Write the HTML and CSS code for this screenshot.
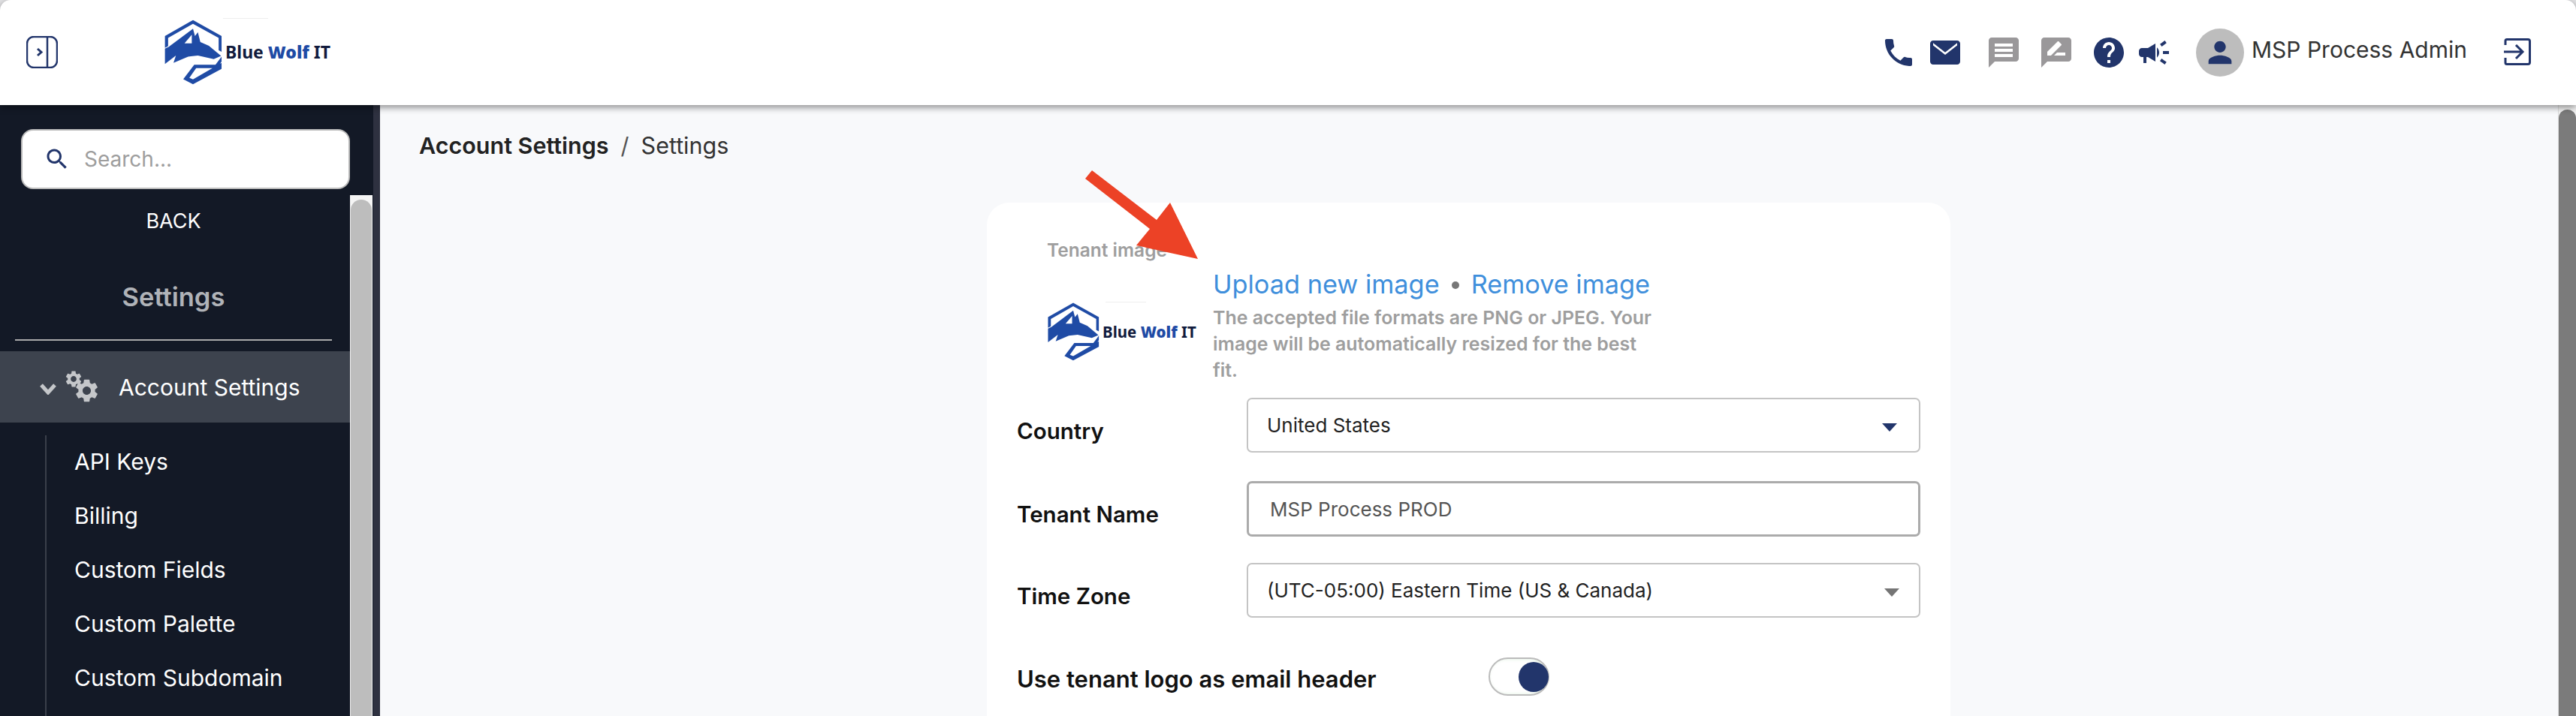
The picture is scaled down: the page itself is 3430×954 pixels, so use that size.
FILE: index.html
```html
<!DOCTYPE html>
<html lang="en">
<head>
  <meta charset="UTF-8">
  <meta name="viewport" content="width=device-width, initial-scale=1.0">
  <title>Account Settings</title>
  <link rel="stylesheet" href="styles.css">
</head>
<body>
  <svg class="defs" width="0" height="0">
    <symbol id="wolf" viewBox="0 0 240 270">
      <path class="wolf-blue" d="M120 5 L237 70 V135 L225 129 V78 L120 20 L18 78 V112 L5 119 V70 Z"/>
      <path class="wolf-blue" fill-rule="evenodd" d="M5 185 V122 L20 115 L120 40 L128 70 L140 55 L150 95 L185 110 L235 152 L205 165 L140 150 L100 155 L40 180 L50 150 Z M85 100 L115 65 V100 Z"/>
      <path class="wolf-blue" d="M237 155 L212 188 L125 188 L80 247 L120 268 L237 205 V180 L120 248 L105 242 L133 202 L218 202 L237 175 Z"/>
    </symbol>
    <symbol id="gear" viewBox="0 0 24 24">
      <path d="M19.14 12.94c.04-.3.06-.61.06-.94 0-.32-.02-.64-.07-.94l2.03-1.58c.18-.14.23-.41.12-.61l-1.92-3.32c-.12-.22-.37-.29-.59-.22l-2.39.96c-.5-.38-1.03-.7-1.62-.94l-.36-2.54c-.04-.24-.24-.41-.48-.41h-3.84c-.24 0-.43.17-.47.41l-.36 2.54c-.59.24-1.13.57-1.62.94l-2.39-.96c-.22-.08-.47 0-.59.22L2.74 8.87c-.12.21-.08.47.12.61l2.03 1.58c-.05.3-.09.63-.09.94s.02.64.07.94l-2.03 1.58c-.18.14-.23.41-.12.61l1.92 3.32c.12.22.37.29.59.22l2.39-.96c.5.38 1.03.7 1.62.94l.36 2.54c.05.24.24.41.48.41h3.84c.24 0 .44-.17.47-.41l.36-2.54c.59-.24 1.13-.56 1.62-.94l2.39.96c.22.08.47 0 .59-.22l1.92-3.32c.12-.22.07-.47-.12-.61l-2.01-1.58zM12 15.6c-1.98 0-3.6-1.62-3.6-3.6s1.62-3.6 3.6-3.6 3.6 1.62 3.6 3.6-1.62 3.6-3.6 3.6z"/>
    </symbol>
  </svg>

  <!-- Top bar -->
  <header class="topbar">
    <svg class="panel-icon" viewBox="0 0 42 43">
      <rect x="1" y="1" width="40" height="41" rx="9"/>
      <path d="M28 1 V42"/>
      <path class="panel-chevron" d="M15 17 L20 21.5 L15 26"/>
    </svg>
    <div class="logo logo-top">
      <svg class="logo-mark"><use href="#wolf"/></svg>
      <span class="logo-name">Blue <b>Wolf</b> IT</span>
    </div>

    <div class="top-actions">
      <svg class="icon navy" viewBox="0 0 24 24"><path d="M6.62 10.79c1.44 2.83 3.76 5.14 6.59 6.59l2.2-2.2c.27-.27.67-.36 1.02-.24 1.12.37 2.33.57 3.57.57.55 0 1 .45 1 1V20c0 .55-.45 1-1 1-9.39 0-17-7.61-17-17 0-.55.45-1 1-1h3.5c.55 0 1 .45 1 1 0 1.25.2 2.45.57 3.57.11.35.03.74-.25 1.02l-2.2 2.2z"/></svg>
      <svg class="icon navy gap-mail" viewBox="0 0 24 24"><path d="M20 4H4c-1.1 0-2 .9-2 2v12c0 1.1.9 2 2 2h16c1.1 0 2-.9 2-2V6c0-1.1-.9-2-2-2zm0 3.2l-8 6.3-8-6.3V5.6l8 6.3 8-6.3v1.6z"/></svg>
      <svg class="icon grey gap-chat" viewBox="0 0 24 24"><path d="M20 2H4c-1.1 0-2 .9-2 2v18l4-4h14c1.1 0 2-.9 2-2V4c0-1.1-.9-2-2-2zM6 6h12v2H6V6zm0 3.5h12v2H6v-2zm0 3.5h12v2H6v-2z"/></svg>
      <svg class="icon grey gap-help" viewBox="0 0 24 24"><path d="M20 2H4c-1.1 0-2 .9-2 2v18l4-4h14c1.1 0 2-.9 2-2V4c0-1.1-.9-2-2-2zM6 14v-2.47l6.88-6.88c.2-.2.51-.2.71 0l1.77 1.77c.2.2.2.51 0 .71L8.47 14H6zm12 0h-7.5l2-2H18v2z"/></svg>
      <svg class="icon navy gap-help" viewBox="0 0 24 24"><path d="M12 2C6.48 2 2 6.48 2 12s4.48 10 10 10 10-4.48 10-10S17.52 2 12 2zm1 17h-2v-2h2v2zm2.07-7.75l-.9.92C13.45 12.9 13 13.5 13 15h-2v-.5c0-1.1.45-2.1 1.17-2.83l1.24-1.26c.37-.36.59-.86.59-1.41 0-1.1-.9-2-2-2s-2 .9-2 2H8c0-2.21 1.79-4 4-4s4 1.79 4 4c0 .88-.36 1.68-.93 2.25z"/></svg>
      <svg class="icon navy gap-mega" viewBox="0 0 24 24"><path d="M18 11v2h4v-2h-4zm-2 6.61c.96.71 2.21 1.65 3.2 2.39.4-.53.8-1.07 1.2-1.6-.99-.74-2.24-1.68-3.2-2.4-.4.54-.8 1.08-1.2 1.61zM20.4 5.6c-.4-.53-.8-1.07-1.2-1.6-.99.74-2.24 1.68-3.2 2.4.4.53.8 1.07 1.2 1.6.96-.72 2.21-1.65 3.2-2.4zM4 9c-1.1 0-2 .9-2 2v2c0 1.1.9 2 2 2h1v4h2v-4h1l5 3V6L8 9H4zm11.5 3c0-1.33-.58-2.53-1.5-3.35v6.69c.92-.81 1.5-2.01 1.5-3.34z"/></svg>
      <div class="avatar">
        <svg class="avatar-icon navy" viewBox="0 0 24 24"><path d="M12 12c2.21 0 4-1.79 4-4s-1.79-4-4-4-4 1.79-4 4 1.79 4 4 4zm0 2c-2.67 0-8 1.34-8 4v2h16v-2c0-2.66-5.33-4-8-4z"/></svg>
      </div>
      <span class="user-name">MSP Process Admin</span>
      <svg class="logout-icon" viewBox="0 0 36 36">
        <path d="M2 9 V3.5 Q2 1.5 4 1.5 H32 Q34.5 1.5 34.5 4 V32 Q34.5 34.5 32 34.5 H4 Q2 34.5 2 32.5 V26"/>
        <path d="M0 18 H24 M16 9 L25 18 L16 27"/>
      </svg>
    </div>
  </header>

  <div class="layout">
    <!-- Sidebar -->
    <aside class="sidebar">
      <div class="search">
        <svg class="search-icon navy" viewBox="0 0 24 24"><path d="M15.5 14h-.79l-.28-.27C15.41 12.59 16 11.11 16 9.5 16 5.91 13.09 3 9.5 3S3 5.91 3 9.5 5.91 16 9.5 16c1.61 0 3.09-.59 4.23-1.57l.27.28v.79l5 4.99L20.49 19l-4.99-5zm-6 0C7.01 14 5 11.99 5 9.5S7.01 5 9.5 5 14 7.01 14 9.5 11.99 14 9.5 14z"/></svg>
        <span class="search-text">Search...</span>
      </div>
      <div class="side-scroll">
        <nav class="side-nav">
          <div class="back">BACK</div>
          <div class="side-title">Settings</div>
          <div class="side-divider"></div>
          <div class="side-active">
            <svg class="chevron" viewBox="0 0 22 16"><path d="M2 3 L11 13 L20 3"/></svg>
            <span class="gears">
              <svg class="gear-small"><use href="#gear"/></svg>
              <svg class="gear-big"><use href="#gear"/></svg>
            </span>
            <span>Account Settings</span>
          </div>
          <ul class="sub-list">
            <li>API Keys</li>
            <li>Billing</li>
            <li>Custom Fields</li>
            <li>Custom Palette</li>
            <li>Custom Subdomain</li>
          </ul>
        </nav>
        <div class="side-track"><div class="side-thumb"></div></div>
      </div>
    </aside>

    <!-- Main -->
    <main class="main">
      <div class="content">
        <div class="breadcrumb"><b>Account Settings</b><span class="crumb-sep">/</span><span>Settings</span></div>
        <section class="card">
          <div class="tenant-image">
            <div class="tenant-left">
              <div class="tenant-title">Tenant image</div>
              <div class="logo logo-small">
                <svg class="logo-mark"><use href="#wolf"/></svg>
                <span class="logo-name">Blue <b>Wolf</b> IT</span>
              </div>
            </div>
            <div class="tenant-right">
              <div class="image-links"><a>Upload new image</a><span class="dot"></span><a>Remove image</a></div>
              <p class="image-note">The accepted file formats are PNG or JPEG. Your image will be automatically resized for the best fit.</p>
            </div>
          </div>

          <div class="form-row row-country">
            <label>Country</label>
            <div class="control"><span>United States</span><i class="caret caret-navy"></i></div>
          </div>
          <div class="form-row row-name">
            <label>Tenant Name</label>
            <div class="control control-input"><span>MSP Process PROD</span></div>
          </div>
          <div class="form-row row-zone">
            <label>Time Zone</label>
            <div class="control"><span>(UTC-05:00) Eastern Time (US &amp; Canada)</span><i class="caret"></i></div>
          </div>
          <div class="toggle-row">
            <label>Use tenant logo as email header</label>
            <div class="toggle"><div class="toggle-thumb"></div></div>
          </div>
        </section>
      </div>
      <div class="main-track"><div class="main-thumb"></div></div>

      <!-- annotation arrow -->
      <svg class="arrow" viewBox="0 0 150 118">
        <path d="M9 0 L0 11 L86 78 L68 100 L150 118 L113 43 L95 66 Z"/>
      </svg>
    </main>
  </div>
</body>
</html>
```

FILE: styles.css
```css
* {
  box-sizing: border-box;
}

html,
body {
  height: 954px;
}

body {
  margin: 0;
  overflow: hidden;
  display: flex;
  flex-direction: column;
  font-family: "Inter", "Noto Sans", sans-serif;
  background: #e4e4e6;
  color: #333;
}

.defs {
  position: absolute;
}

.navy {
  fill: #22356b;
}

.grey {
  fill: #9a989a;
}

/* Top bar */
.topbar {
  position: relative;
  z-index: 2;
  flex: 0 0 140px;
  display: flex;
  align-items: center;
  padding: 0 60px 0 35px;
  background: #fff;
  border-radius: 14px 14px 0 0;
  box-shadow: 0 3px 10px rgba(0, 0, 0, 0.45);
}

.panel-icon {
  width: 42px;
  height: 43px;
  margin-top: -2px;
  fill: none;
  stroke: #22356b;
  stroke-width: 2.5;
}

.panel-chevron {
  stroke-width: 3;
}

.logo {
  position: relative;
  display: flex;
  align-items: center;
}

.logo-top {
  margin-left: 141px;
  margin-top: -2px;
}

.logo-top .logo-mark {
  width: 78px;
  height: 88px;
}

.logo-name {
  font-family: "Noto Sans", sans-serif;
  font-weight: 700;
  color: #111b3d;
  white-space: nowrap;
}

.logo-name b {
  color: #1f4ba5;
}

.logo-name::before {
  content: "";
  position: absolute;
  top: -1px;
  height: 1px;
  background: #eee;
}

.logo-top .logo-name {
  margin-left: 4px;
  font-size: 23px;
}

.logo-top .logo-name::before {
  left: 79px;
  width: 60px;
}

.wolf-blue {
  fill: #1f4ba5;
}

.top-actions {
  margin-left: auto;
  display: flex;
  align-items: center;
}

.icon {
  width: 48px;
  height: 48px;
}

.gap-mail {
  margin-left: 14px;
}

.gap-chat {
  margin-left: 30px;
}

.gap-help {
  margin-left: 22px;
}

.gap-mega {
  margin-left: 12px;
}

.avatar {
  width: 64px;
  height: 64px;
  margin-left: 32px;
  display: flex;
  align-items: center;
  justify-content: center;
  border-radius: 50%;
  background: #bdbdbd;
}

.avatar-icon {
  width: 46px;
  height: 46px;
}

.user-name {
  width: 287px;
  margin-left: 10px;
  margin-top: -8px;
  font-size: 30px;
  white-space: nowrap;
  color: #333;
}

.logout-icon {
  width: 36px;
  height: 36px;
  margin-left: 49px;
  margin-top: -2px;
  fill: none;
  stroke: #22356b;
  stroke-width: 3;
}

/* Layout */
.layout {
  flex: 1;
  display: flex;
  min-height: 0;
}

/* Sidebar */
.sidebar {
  flex: 0 0 506px;
  display: flex;
  flex-direction: column;
  padding-top: 32px;
  background: #131926;
  border-right: 9px solid #2e3140;
  color: #fff;
}

.search {
  width: 438px;
  height: 80px;
  margin-left: 28px;
  display: flex;
  align-items: center;
  padding-left: 28px;
  background: #fff;
  border: 2px solid #bbb;
  border-radius: 16px;
}

.search-icon {
  width: 36px;
  height: 36px;
}

.search-text {
  margin-left: 18px;
  font-size: 28px;
  color: #9e9e9e;
}

.side-scroll {
  flex: 1;
  min-height: 0;
  display: flex;
  margin-top: 8px;
}

.side-nav {
  width: 466px;
}

.back {
  padding: 17px 4px 0 0;
  height: 54px;
  line-height: 36px;
  text-align: center;
  font-size: 27px;
}

.side-title {
  margin-top: 60px;
  padding-right: 4px;
  height: 44px;
  line-height: 44px;
  text-align: center;
  font-size: 34.5px;
  font-weight: 600;
  color: #b0b3b8;
}

.side-divider {
  width: 422px;
  height: 2px;
  margin: 34px 0 0 20px;
  background: #aaa;
}

.side-active {
  height: 95px;
  margin-top: 14px;
  display: flex;
  align-items: center;
  padding-left: 53px;
  background: #3d434e;
  font-size: 30px;
}

.chevron {
  width: 22px;
  height: 16px;
  margin-top: 4px;
  fill: none;
  stroke: #c5c7ca;
  stroke-width: 5;
}

.gears {
  position: relative;
  width: 44px;
  height: 42px;
  margin: 0 27px 0 12px;
  fill: #c5c7ca;
}

.gear-small {
  position: absolute;
  left: -2px;
  top: -3px;
  width: 26px;
  height: 26px;
}

.gear-big {
  position: absolute;
  left: 10px;
  top: 7px;
  width: 37px;
  height: 37px;
}

.sub-list {
  list-style: none;
  margin: 17px 0 0 60px;
  padding: 0 0 0 37px;
  border-left: 2px solid #3a3f4a;
  height: 374px;
  font-size: 30px;
}

.sub-list li {
  height: 72px;
  line-height: 70px;
}

.side-track {
  width: 30px;
  background: #f5f5f5;
  padding: 6px 1px 0;
}

.side-thumb {
  height: 100%;
  background: #bdbdbd;
  border-radius: 14px 14px 0 0;
}

/* Main */
.main {
  position: relative;
  flex: 1;
  display: flex;
  min-width: 0;
  background: #f8f9fb;
}

.content {
  flex: 1;
  min-width: 0;
}

.breadcrumb {
  margin: 38px 0 0 52px;
  height: 32px;
  line-height: 32px;
  font-size: 30.5px;
}

.breadcrumb b {
  font-weight: 600;
  color: #222;
}

.crumb-sep {
  margin: 0 16px;
  color: #555;
}

.card {
  width: 1283px;
  height: 684px;
  margin: 60px 0 0 808px;
  padding: 46px 40px 0;
  background: #fff;
  border-radius: 30px 30px 0 0;
}

.tenant-image {
  display: flex;
  height: 214px;
  padding-left: 40px;
}

.tenant-left {
  width: 221px;
}

.tenant-title {
  height: 34px;
  line-height: 34px;
  font-size: 24.5px;
  font-weight: 600;
  color: #9e9e9e;
}

.logo-small {
  margin-top: 52px;
}

.logo-small .logo-mark {
  width: 70px;
  height: 79px;
}

.logo-small .logo-name {
  margin-left: 4px;
  font-size: 20.5px;
}

.logo-small .logo-name::before {
  top: 0;
  left: 78px;
  width: 54px;
}

.tenant-right {
  width: 590px;
  padding-top: 40px;
}

.image-links {
  display: flex;
  align-items: center;
  height: 44px;
  font-size: 34.3px;
  color: #3f8fdc;
}

.dot {
  width: 10px;
  height: 10px;
  margin: 4px 16px 0;
  border-radius: 50%;
  background: #777;
}

.image-note {
  margin: 6px 0 0;
  line-height: 35px;
  font-size: 24.9px;
  font-weight: 600;
  color: #9e9e9e;
}

.form-row {
  display: flex;
  align-items: center;
}

.row-country {
  margin-top: 0;
}

.row-name {
  margin-top: 38px;
}

.row-zone {
  margin-top: 35px;
}

.form-row label,
.toggle-row label {
  font-size: 29.5px;
  font-weight: 600;
  color: #111;
}

.form-row label {
  width: 306px;
  padding-top: 14px;
}

.control {
  position: relative;
  width: 897px;
  height: 73px;
  display: flex;
  align-items: center;
  padding: 0 0 0 25px;
  border: 2px solid #c4c4c4;
  border-radius: 7px;
  font-size: 26px;
  color: #222;
}

.control-input {
  height: 74px;
  padding-left: 28px;
  border-width: 3px;
  border-color: #ababab;
  color: #555;
}

.caret {
  position: absolute;
  right: 26px;
  top: 32px;
  border-left: 10px solid transparent;
  border-right: 10px solid transparent;
  border-top: 11px solid #757575;
}

.caret-navy {
  right: 29px;
  border-top-color: #22356b;
}

.toggle-row {
  display: flex;
  align-items: center;
  margin-top: 53px;
}

.toggle-row label {
  width: 628px;
  padding-top: 6px;
  font-size: 31px;
}

.toggle {
  width: 81px;
  height: 51px;
  padding: 4px 2px 0 38px;
  border: 2px solid #bbb;
  border-radius: 26px;
  box-shadow: inset -2px 0 4px rgba(120, 190, 120, 0.25);
}

.toggle-thumb {
  width: 40px;
  height: 40px;
  border-radius: 50%;
  background: #22356b;
}

.main-track {
  flex: 0 0 24px;
  padding-top: 6px;
  background: #f3f3f3;
  border-left: 1px solid #ddd;
}

.main-thumb {
  height: 100%;
  background: #7b7b7b;
  border-radius: 14px 14px 0 0;
}

/* Arrow over the card */
.arrow {
  position: absolute;
  left: 939px;
  top: 87px;
  width: 150px;
  height: 118px;
  fill: #ec4226;
}
```
